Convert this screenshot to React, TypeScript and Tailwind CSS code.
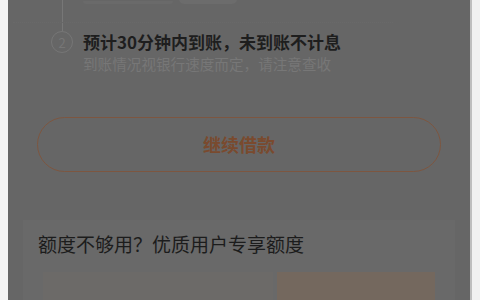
import React from "react";

export default function App() {
  const font = { fontFamily: '"Noto Sans CJK SC", "Noto Sans", sans-serif' };
  return (
    <div className="w-[480px] h-[300px] overflow-hidden flex bg-white" style={font}>
      <div className="w-[8px] shrink-0 bg-[#f4f4f4]" />
      <div className="w-[462px] shrink-0 bg-[#666666] flex flex-col">
        {/* step area */}
        <div className="flex pl-[43px]">
          <div className="w-[22px] flex flex-col items-center">
            <div className="w-px h-[31px] bg-[#777777]" />
            <div className="w-[22px] h-[22px] rounded-full border border-[#767676] flex items-center justify-center text-[13px] leading-none text-[#767676]">
              2
            </div>
          </div>
          <div className="flex flex-col ml-[10px]">
            <div className="flex items-end h-[4px] overflow-hidden">
              <div className="h-[3px] w-[90px] bg-[#6a6a6a] rounded-b" />
              <div className="ml-[6px] h-[5px] w-[58px] bg-[#6c6c6c] rounded-b-md" />
            </div>
            <div className="h-px mt-[18px] w-[380px] -ml-[70px] border-t border-dotted border-[#696969]" />
            <div className="mt-[8px] text-[17px] leading-[22px] font-semibold text-[#1e1e1e] whitespace-nowrap">
              预计30分钟内到账，未到账不计息
            </div>
            <div className="mt-[1px] text-[14.6px] leading-[20px] text-[#777777] whitespace-nowrap">
              到账情况视银行速度而定，请注意查收
            </div>
          </div>
        </div>
        {/* button */}
        <div className="mt-[43px] px-[29px]">
          <div className="h-[55px] rounded-full border border-[#7d5640] flex items-center justify-center text-[18px] font-bold text-[#7a4a2e]">
            继续借款
          </div>
        </div>
        {/* card */}
        <div className="mt-[48px] mx-[15px] flex-1 bg-[#696969] flex flex-col">
          <div className="pt-[12px] pl-[15px] text-[19px] leading-[24px] text-[#1c1c1c] whitespace-nowrap">
            额度不够用？优质用户专享额度
          </div>
          <div className="mt-[16px] mx-[20px] flex gap-[4px] flex-1">
            <div className="w-[230px] bg-[#6c6a68]" />
            <div className="flex-1 bg-[#74685e]" />
          </div>
        </div>
      </div>
      <div className="w-[2px] shrink-0 bg-[#bdbdbd]" />
      <div className="flex-1 bg-[#f0f0f0]" />
    </div>
  );
}
